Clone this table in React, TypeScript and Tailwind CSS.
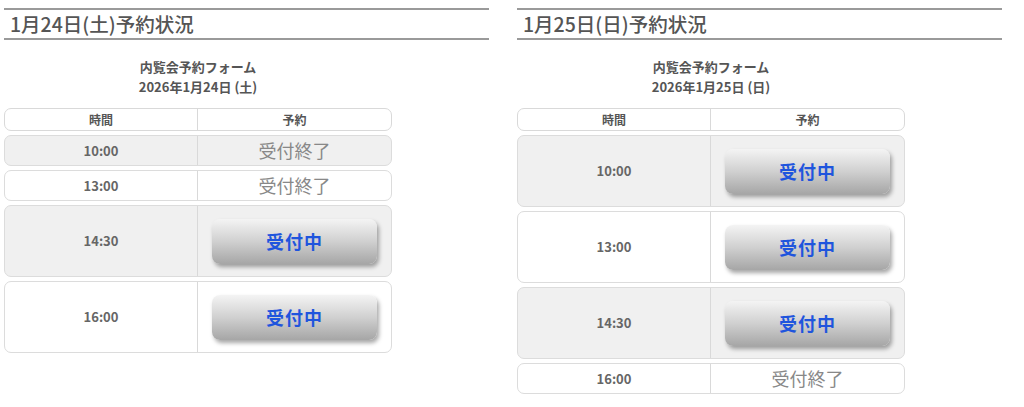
type Slot = { time: string; open: boolean };

interface DayProps {
  title: string;
  date: string;
  slots: Slot[];
}

const ReserveButton = () => (
  <div className="w-[165px] h-[45px] rounded-[8px] bg-linear-to-b from-[#f4f4f4] via-[#d0d0d0] to-[#a6a6a6] shadow-[2px_3px_4px_rgba(0,0,0,0.35)] flex items-center justify-center">
    <span className="text-[18px] font-bold text-[#1f55dd] tracking-[1px]">受付中</span>
  </div>
);

const DayPanel = ({ title, date, slots }: DayProps) => (
  <div className="w-[485px] flex flex-col">
    {/* Section heading */}
    <div className="border-t-2 border-b-2 border-[#9a9a9a] h-[32px] px-[6px] flex items-center">
      <h2 className="text-[19.5px] leading-[28px] font-medium text-[#555]">{title}</h2>
    </div>

    {/* Form */}
    <div className="w-[388px] flex flex-col">
      <div className="mt-[17px] text-center text-[13px] leading-[20px] font-bold text-[#555]">
        <p>内覧会予約フォーム</p>
        <p>{date}</p>
      </div>

      <div className="mt-[11px] flex flex-col gap-[4px]">
        <div className="grid grid-cols-2 h-[23px] border border-[#d9d9d9] rounded-[7px] bg-white text-[12px] font-bold text-[#555]">
          <div className="flex items-center justify-center border-r border-[#d9d9d9]">時間</div>
          <div className="flex items-center justify-center">予約</div>
        </div>

        {slots.map((s, i) => (
          <div
            key={s.time}
            className={`grid grid-cols-2 border border-[#dcdcdc] rounded-[7px] ${
              s.open ? 'h-[72px]' : 'h-[31px]'
            } ${i % 2 === 0 ? 'bg-[#f0f0f0]' : 'bg-white'}`}
          >
            <div className="flex items-center justify-center border-r border-[#d9d9d9] text-[13px] font-bold text-[#666]">
              {s.time}
            </div>
            <div className="flex items-center justify-center">
              {s.open ? (
                <ReserveButton />
              ) : (
                <span className="text-[18px] text-[#888]">受付終了</span>
              )}
            </div>
          </div>
        ))}
      </div>
    </div>
  </div>
);

export default function App() {
  return (
    <div
      className="w-[1024px] h-[407px] bg-white pt-[8px] pl-[4px] flex gap-[28px]"
      style={{ fontFamily: '"Noto Sans CJK JP", "Noto Sans", sans-serif' }}
    >
      <DayPanel
        title="1月24日(土)予約状況"
        date="2026年1月24日 (土)"
        slots={[
          { time: '10:00', open: false },
          { time: '13:00', open: false },
          { time: '14:30', open: true },
          { time: '16:00', open: true },
        ]}
      />
      <DayPanel
        title="1月25日(日)予約状況"
        date="2026年1月25日 (日)"
        slots={[
          { time: '10:00', open: true },
          { time: '13:00', open: true },
          { time: '14:30', open: true },
          { time: '16:00', open: false },
        ]}
      />
    </div>
  );
}
